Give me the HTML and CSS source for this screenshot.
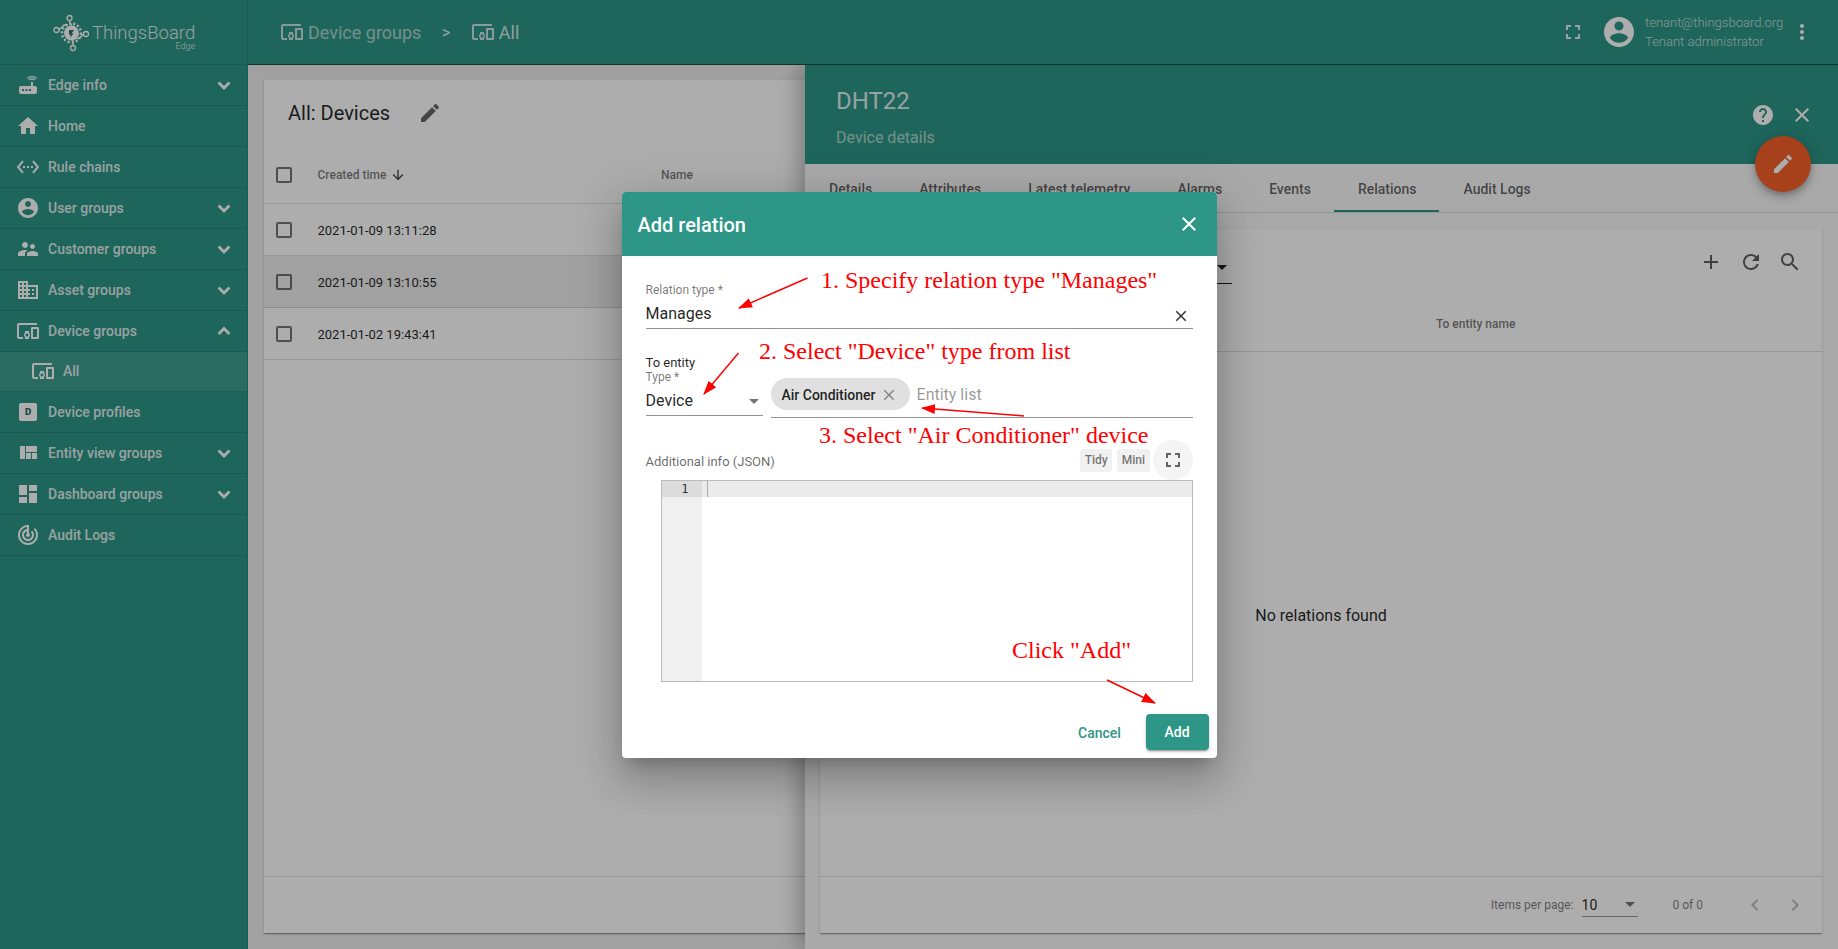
FILE: index.html
```html
<!DOCTYPE html>
<html>
<head>
    <title>ThingsBoard Edge - Add relation</title>
    <meta charset="utf-8">
    <link rel="stylesheet" href="styles.css">
</head>
<body>
    <svg class="sprite" xmlns="http://www.w3.org/2000/svg">
        <symbol id="i-router" viewBox="0 0 24 24"><path d="M20.2 5.9l.8-.8C19.6 3.7 17.8 3 16 3s-3.6.7-5 2.1l.8.8C13 4.8 14.5 4.2 16 4.2s3 .6 4.2 1.7zm-.9.8c-.9-.9-2.1-1.4-3.3-1.4s-2.4.5-3.3 1.4l.8.8c.7-.7 1.6-1 2.5-1 .9 0 1.8.3 2.5 1l.8-.8zM19 13h-2V9h-2v4H5c-1.1 0-2 .9-2 2v4c0 1.1.9 2 2 2h14c1.1 0 2-.9 2-2v-4c0-1.1-.9-2-2-2zM8 18H6v-2h2v2zm3.5 0h-2v-2h2v2zm3.5 0h-2v-2h2v2z"/></symbol>
        <symbol id="i-home" viewBox="0 0 24 24"><path d="M10 20v-6h4v6h5v-8h3L12 3 2 12h3v8z"/></symbol>
        <symbol id="i-ethernet" viewBox="0 0 24 24"><path d="M7.77 6.76L6.23 5.48.82 12l5.41 6.52 1.54-1.28L3.42 12l4.35-5.24zM7 13h2v-2H7v2zm10-2h-2v2h2v-2zm-6 2h2v-2h-2v2zm6.77-7.52l-1.54 1.28L20.58 12l-4.35 5.24 1.54 1.28L23.18 12l-5.41-6.52z"/></symbol>
        <symbol id="i-account" viewBox="0 0 24 24"><path d="M12 2C6.48 2 2 6.48 2 12s4.48 10 10 10 10-4.48 10-10S17.52 2 12 2zm0 3c1.66 0 3 1.34 3 3s-1.34 3-3 3-3-1.34-3-3 1.34-3 3-3zm0 14.2c-2.5 0-4.71-1.28-6-3.22.03-1.99 4-3.08 6-3.08 1.99 0 5.97 1.09 6 3.08-1.29 1.94-3.5 3.22-6 3.22z"/></symbol>
        <symbol id="i-people" viewBox="0 0 24 24"><path d="M16.5 12c1.38 0 2.49-1.12 2.49-2.5S17.88 7 16.5 7C15.12 7 14 8.12 14 9.5s1.12 2.5 2.5 2.5zM9 11c1.66 0 2.99-1.34 2.99-3S10.66 5 9 5C7.34 5 6 6.34 6 8s1.34 3 3 3zm7.5 3c-1.83 0-5.5.92-5.5 2.75V19h11v-2.25c0-1.83-3.67-2.75-5.5-2.75zM9 13c-2.33 0-7 1.17-7 3.5V19h7v-2.25c0-.85.33-2.34 2.37-3.47C10.5 13.1 9.66 13 9 13z"/></symbol>
        <symbol id="i-domain" viewBox="0 0 24 24"><path d="M12 7V3H2v18h20V7H12zM6 19H4v-2h2v2zm0-4H4v-2h2v2zm0-4H4V9h2v2zm0-4H4V5h2v2zm4 12H8v-2h2v2zm0-4H8v-2h2v2zm0-4H8V9h2v2zm0-4H8V5h2v2zm10 12h-8v-2h2v-2h-2v-2h2v-2h-2V9h8v10zm-2-8h-2v2h2v-2zm0 4h-2v2h2v-2z"/></symbol>
        <symbol id="i-devices" viewBox="0 0 24 24"><path d="M3 6h18V4H3c-1.1 0-2 .9-2 2v12c0 1.1.9 2 2 2h4v-2H3V6zm10 6H9v1.78c-.61.55-1 1.33-1 2.22s.39 1.67 1 2.22V20h4v-1.78c.61-.55 1-1.34 1-2.22s-.39-1.67-1-2.22V12zm-2 5.5c-.83 0-1.5-.67-1.5-1.5s.67-1.5 1.5-1.5 1.5.67 1.5 1.5-.67 1.5-1.5 1.5zM22 8h-6c-.5 0-1 .5-1 1v10c0 .5.5 1 1 1h6c.5 0 1-.5 1-1V9c0-.5-.5-1-1-1zm-1 10h-4v-8h4v8z"/></symbol>
        <symbol id="i-quilt" viewBox="0 0 24 24"><path d="M10 18h5v-6h-5v6zm-6 0h5V5H4v13zm12 0h5v-6h-5v6zM10 5v6h11V5H10z"/></symbol>
        <symbol id="i-dashboard" viewBox="0 0 24 24"><path d="M3 13h8V3H3v10zm0 8h8v-6H3v6zm10 0h8V11h-8v10zm0-18v6h8V3h-8z"/></symbol>
        <symbol id="i-track" viewBox="0 0 24 24"><path d="M19.07 4.93l-1.41 1.41C19.1 7.79 20 9.79 20 12c0 4.42-3.58 8-8 8s-8-3.58-8-8c0-4.08 3.05-7.44 7-7.93v2.02C8.16 6.57 6 9.03 6 12c0 3.31 2.69 6 6 6s6-2.69 6-6c0-1.66-.67-3.16-1.76-4.24l-1.41 1.41C15.55 9.9 16 10.9 16 12c0 2.21-1.79 4-4 4s-4-1.79-4-4c0-1.86 1.28-3.41 3-3.86v2.14c-.6.35-1 .98-1 1.72 0 1.1.9 2 2 2s2-.9 2-2c0-.74-.4-1.38-1-1.72V2h-1C6.48 2 2 6.48 2 12s4.48 10 10 10 10-4.48 10-10c0-2.76-1.12-5.26-2.93-7.07z"/></symbol>
        <symbol id="i-edit" viewBox="0 0 24 24"><path d="M3 17.25V21h3.75L17.81 9.94l-3.75-3.75L3 17.25zM20.71 7.04c.39-.39.39-1.02 0-1.41l-2.34-2.34c-.39-.39-1.02-.39-1.41 0l-1.83 1.83 3.75 3.75 1.83-1.83z"/></symbol>
        <symbol id="i-close" viewBox="0 0 24 24"><path d="M19 6.41L17.59 5 12 10.59 6.41 5 5 6.41 10.59 12 5 17.59 6.41 19 12 13.41 17.59 19 19 17.59 13.41 12z"/></symbol>
        <symbol id="i-fullscreen" viewBox="0 0 24 24"><path d="M7 14H5v5h5v-2H7v-3zm-2-4h2V7h3V5H5v5zm12 7h-3v2h5v-5h-2v3zM14 5v2h3v3h2V5h-5z"/></symbol>
        <symbol id="i-more" viewBox="0 0 24 24"><path d="M12 8c1.1 0 2-.9 2-2s-.9-2-2-2-2 .9-2 2 .9 2 2 2zm0 2c-1.1 0-2 .9-2 2s.9 2 2 2 2-.9 2-2-.9-2-2-2zm0 6c-1.1 0-2 .9-2 2s.9 2 2 2 2-.9 2-2-.9-2-2-2z"/></symbol>
        <symbol id="i-help" viewBox="0 0 24 24"><path d="M12 2C6.48 2 2 6.48 2 12s4.48 10 10 10 10-4.48 10-10S17.52 2 12 2zm1 17h-2v-2h2v2zm2.07-7.75l-.9.92C13.45 12.9 13 13.5 13 15h-2v-.5c0-1.1.45-2.1 1.17-2.83l1.24-1.26c.37-.36.59-.86.59-1.41 0-1.1-.9-2-2-2s-2 .9-2 2H8c0-2.21 1.79-4 4-4s4 1.79 4 4c0 .88-.36 1.68-.93 2.25z"/></symbol>
        <symbol id="i-add" viewBox="0 0 24 24"><path d="M19 13h-6v6h-2v-6H5v-2h6V5h2v6h6v2z"/></symbol>
        <symbol id="i-refresh" viewBox="0 0 24 24"><path d="M17.65 6.35C16.2 4.9 14.21 4 12 4c-4.42 0-7.99 3.58-7.99 8s3.57 8 7.99 8c3.73 0 6.84-2.55 7.73-6h-2.08c-.82 2.33-3.04 4-5.65 4-3.31 0-6-2.69-6-6s2.69-6 6-6c1.66 0 3.14.69 4.22 1.78L13 11h7V4l-2.35 2.35z"/></symbol>
        <symbol id="i-search" viewBox="0 0 24 24"><path d="M15.5 14h-.79l-.28-.27C15.41 12.59 16 11.11 16 9.5 16 5.91 13.09 3 9.5 3S3 5.91 3 9.5 5.91 16 9.5 16c1.61 0 3.09-.59 4.23-1.57l.27.28v.79l5 4.99L20.49 19l-4.99-5zm-6 0C7.01 14 5 11.99 5 9.5S7.01 5 9.5 5 14 7.01 14 9.5 11.99 14 9.5 14z"/></symbol>
        <symbol id="i-left" viewBox="0 0 24 24"><path d="M15.41 7.41L14 6l-6 6 6 6 1.41-1.41L10.83 12z"/></symbol>
        <symbol id="i-right" viewBox="0 0 24 24"><path d="M10 6L8.59 7.41 13.17 12l-4.58 4.59L10 18l6-6z"/></symbol>
        <symbol id="i-down" viewBox="0 0 24 24"><path d="M20 12l-1.41-1.41L13 16.17V4h-2v12.17l-5.58-5.59L4 12l8 8 8-8z"/></symbol>
        <symbol id="i-chev-down" viewBox="0 0 24 24"><path d="M5.5 9l6.5 6.5L18.500 9" fill="none" stroke="currentColor" stroke-width="3.4"/></symbol>
        <symbol id="i-chev-up" viewBox="0 0 24 24"><path d="M5.500 15.500L12 9l6.500 6.500" fill="none" stroke="currentColor" stroke-width="3.4"/></symbol>
    </svg>

    <aside class="sidebar">
        <div class="logo">
            <svg class="logo-mark" viewBox="0 0 38 38">
                <g fill="none" stroke="currentColor" stroke-width="1.3">
                    <circle cx="16.500" cy="4" r="2.500"/>
                    <circle cx="3.500" cy="16" r="2.500"/>
                    <circle cx="33" cy="20" r="2.500"/>
                    <circle cx="20" cy="34" r="2.500"/>
                    <path d="M16.500 6.500L19 13M6 16l5-5h4M30.500 20.500l-4.500 4h-3M20 31.500V24"/>
                </g>
                <circle cx="18.500" cy="19" r="7.500" fill="currentColor"/>
                <circle cx="18.500" cy="19" r="9.500" fill="none" stroke="currentColor" stroke-width="2.500" stroke-dasharray="2 2.200"/>
                <path d="M16 16h5l-2.500 3.500h2L17 24l.8-3.500h-1.800z" fill="#1f6e62"/>
            </svg>
            <div class="logo-text">
                <span class="logo-name">ThingsBoard</span>
                <span class="logo-edge">Edge</span>
            </div>
        </div>
        <nav class="menu">
            <a class="menu-item"><svg class="icon"><use href="#i-router"/></svg><span>Edge info</span><svg class="chev"><use href="#i-chev-down"/></svg></a>
            <a class="menu-item"><svg class="icon"><use href="#i-home"/></svg><span>Home</span></a>
            <a class="menu-item"><svg class="icon"><use href="#i-ethernet"/></svg><span>Rule chains</span></a>
            <a class="menu-item"><svg class="icon"><use href="#i-account"/></svg><span>User groups</span><svg class="chev"><use href="#i-chev-down"/></svg></a>
            <a class="menu-item"><svg class="icon"><use href="#i-people"/></svg><span>Customer groups</span><svg class="chev"><use href="#i-chev-down"/></svg></a>
            <a class="menu-item"><svg class="icon"><use href="#i-domain"/></svg><span>Asset groups</span><svg class="chev"><use href="#i-chev-down"/></svg></a>
            <a class="menu-item"><svg class="icon"><use href="#i-devices"/></svg><span>Device groups</span><svg class="chev"><use href="#i-chev-up"/></svg></a>
            <a class="menu-item sub-item"><svg class="icon"><use href="#i-devices"/></svg><span>All</span></a>
            <a class="menu-item"><span class="profile-icon">D</span><span>Device profiles</span></a>
            <a class="menu-item"><svg class="icon"><use href="#i-quilt"/></svg><span>Entity view groups</span><svg class="chev"><use href="#i-chev-down"/></svg></a>
            <a class="menu-item"><svg class="icon"><use href="#i-dashboard"/></svg><span>Dashboard groups</span><svg class="chev"><use href="#i-chev-down"/></svg></a>
            <a class="menu-item"><svg class="icon"><use href="#i-track"/></svg><span>Audit Logs</span></a>
        </nav>
    </aside>

    <div class="main">
        <header class="topbar">
            <div class="crumbs">
                <svg class="crumb-icon"><use href="#i-devices"/></svg>
                <span class="crumb-dim">Device groups</span>
                <span class="crumb-sep">&gt;</span>
                <svg class="crumb-icon"><use href="#i-devices"/></svg>
                <span class="crumb-now">All</span>
            </div>
            <div class="user-area">
                <svg class="icon-24 fs-icon"><use href="#i-fullscreen"/></svg>
                <svg class="avatar"><use href="#i-account"/></svg>
                <div class="user-info">
                    <div>tenant@thingsboard.org</div>
                    <div>Tenant administrator</div>
                </div>
                <svg class="icon-24"><use href="#i-more"/></svg>
            </div>
        </header>

        <div class="content">
            <section class="card devices">
                <div class="card-title">
                    <h1>All: Devices</h1>
                    <svg class="icon-24 title-edit"><use href="#i-edit"/></svg>
                </div>
                <div class="t-row t-head">
                    <span class="check"></span>
                    <span class="sort">Created time <svg class="sort-icon"><use href="#i-down"/></svg></span>
                    <span>Name</span>
                </div>
                <div class="t-row"><span class="check"></span><span>2021-01-09 13:11:28</span></div>
                <div class="t-row t-hover"><span class="check"></span><span>2021-01-09 13:10:55</span></div>
                <div class="t-row"><span class="check"></span><span>2021-01-02 19:43:41</span></div>
                <div class="card-foot"></div>
            </section>
        </div>
    </div>

    <section class="drawer">
        <div class="drawer-head">
            <div class="drawer-name">DHT22</div>
            <div class="drawer-sub">Device details</div>
            <div class="drawer-actions">
                <svg class="icon-24"><use href="#i-help"/></svg>
                <svg class="icon-24"><use href="#i-close"/></svg>
            </div>
            <div class="fab"><svg class="icon-24"><use href="#i-edit"/></svg></div>
        </div>
        <div class="tabs">
            <span class="tab">Details</span>
            <span class="tab">Attributes</span>
            <span class="tab">Latest telemetry</span>
            <span class="tab">Alarms</span>
            <span class="tab">Events</span>
            <span class="tab tab-on">Relations</span>
            <span class="tab">Audit Logs</span>
        </div>
        <div class="drawer-body">
            <div class="card relations">
                <div class="rel-tools">
                    <div class="rel-select"><i class="caret caret-dark"></i></div>
                    <div class="rel-buttons">
                        <svg class="icon-24"><use href="#i-add"/></svg>
                        <svg class="icon-24"><use href="#i-refresh"/></svg>
                        <svg class="icon-24"><use href="#i-search"/></svg>
                    </div>
                </div>
                <div class="rel-head">To entity name</div>
                <div class="rel-empty">No relations found</div>
                <div class="rel-foot">
                    <span class="pg-label">Items per page:</span>
                    <div class="pg-select"><span>10</span><i class="caret"></i></div>
                    <span class="pg-range">0 of 0</span>
                    <svg class="icon-24 pg-btn"><use href="#i-left"/></svg>
                    <svg class="icon-24 pg-btn"><use href="#i-right"/></svg>
                </div>
            </div>
        </div>
    </section>

    <div class="backdrop">
        <div class="dialog">
            <div class="dialog-head">
                <h2>Add relation</h2>
                <svg class="icon-24"><use href="#i-close"/></svg>
            </div>
            <div class="dialog-form">
                <div class="field type-field">
                    <label>Relation type *</label>
                    <div class="value-row">
                        <span>Manages</span>
                        <svg class="clear-icon"><use href="#i-close"/></svg>
                    </div>
                </div>
                <div class="to-entity">To entity</div>
                <div class="entity-row">
                    <div class="field entity-type">
                        <label>Type *</label>
                        <div class="value-row">
                            <span>Device</span>
                            <i class="caret"></i>
                        </div>
                    </div>
                    <div class="entity-list">
                        <span class="chip">Air Conditioner<svg class="chip-x"><use href="#i-close"/></svg></span>
                        <span class="placeholder">Entity list</span>
                    </div>
                </div>
                <div class="json-row">
                    <span class="json-label">Additional info (JSON)</span>
                    <span class="mini-btn">Tidy</span>
                    <span class="mini-btn">Mini</span>
                    <span class="round-btn"><svg class="icon-24"><use href="#i-fullscreen"/></svg></span>
                </div>
                <div class="editor">
                    <div class="gutter"><div class="gutter-on">1</div></div>
                    <div class="code"><div class="code-on"><i class="cursor"></i></div></div>
                </div>
            </div>
            <div class="dialog-actions">
                <span class="btn-text">Cancel</span>
                <span class="btn-add">Add</span>
            </div>
        </div>
    </div>

    <div class="notes">
        <svg class="arrows" viewBox="0 0 1838 949">
            <defs>
                <marker id="head" markerUnits="userSpaceOnUse" markerWidth="14" markerHeight="10" refX="13" refY="5" orient="auto">
                    <path d="M0 0L14 5L0 10z" fill="#f00"/>
                </marker>
            </defs>
            <g stroke="#f00" stroke-width="1.500">
                <line x1="807.500" y1="278" x2="739" y2="308" marker-end="url(#head)"/>
                <line x1="738.500" y1="353" x2="704" y2="394" marker-end="url(#head)"/>
                <line x1="1024" y1="416" x2="922" y2="408" marker-end="url(#head)"/>
                <line x1="1107" y1="680" x2="1155" y2="703" marker-end="url(#head)"/>
            </g>
        </svg>
        <span class="note note-1">1. Specify relation type "Manages"</span>
        <span class="note note-2">2. Select "Device" type from list</span>
        <span class="note note-3">3. Select "Air Conditioner" device</span>
        <span class="note note-4">Click "Add"</span>
    </div>
</body>
</html>
```

FILE: styles.css
```css
* {
    box-sizing: border-box;
}
html, body {
    height: 100%;
}
body {
    margin: 0;
    display: flex;
    overflow: hidden;
    position: relative;
    font-family: Roboto, "Noto Sans", sans-serif;
    font-size: 14px;
    color: rgba(0, 0, 0, .87);
    background: #eee;
}
.sprite {
    display: none;
}
svg {
    fill: currentColor;
    flex: none;
}
.icon-24 {
    width: 24px;
    height: 24px;
}

/* sidebar */
.sidebar {
    width: 248px;
    flex: none;
    background: #2d9687;
    color: #fff;
    border-right: 1px solid rgba(0, 0, 0, .08);
    z-index: 2;
}
.logo {
    height: 65px;
    display: flex;
    align-items: flex-start;
    padding: 14px 0 0 53px;
    border-bottom: 1px solid rgba(0, 0, 0, .12);
}
.logo-mark {
    width: 38px;
    height: 38px;
}
.logo-text {
    display: flex;
    flex-direction: column;
    align-items: flex-end;
    margin-left: 1px;
}
.logo-name {
    font-size: 18.500px;
    font-weight: 300;
    line-height: 18px;
    margin-top: 10px;
    opacity: .85;
}
.logo-edge {
    font-size: 9px;
    font-weight: 300;
    line-height: 8px;
    opacity: .85;
}
.menu-item {
    height: 41px;
    display: flex;
    align-items: center;
    padding-left: 16px;
    font-weight: 500;
    border-bottom: 1px solid rgba(0, 0, 0, .12);
    color: rgba(255, 255, 255, .87);
}
.menu-item .icon {
    width: 24px;
    height: 24px;
    margin-right: 8px;
    color: #fff;
}
.menu-item .chev {
    width: 20px;
    height: 20px;
    margin-left: auto;
    margin-right: 13px;
    color: #fff;
}
.sub-item {
    height: 40px;
    padding-left: 31px;
    padding-bottom: 1px;
    background: rgba(255, 255, 255, .08);
}
.profile-icon {
    width: 18px;
    height: 18px;
    margin: 0 11px 0 3px;
    background: #fff;
    border-radius: 2px;
    color: #1f6e62;
    font-family: "Liberation Mono", monospace;
    font-size: 11px;
    font-weight: 700;
    line-height: 18px;
    text-align: center;
}

/* top bar and page */
.main {
    flex: 1;
    min-width: 0;
    display: flex;
    flex-direction: column;
}
.topbar {
    height: 65px;
    flex: none;
    display: flex;
    align-items: center;
    padding: 0 24px 0 32px;
    background: #2d9687;
    color: #fff;
    border-bottom: 1px solid rgba(0, 0, 0, .5);
    z-index: 2;
}
.crumbs {
    display: flex;
    align-items: center;
    font-size: 18px;
}
.crumb-icon {
    width: 24px;
    height: 24px;
    margin-right: 4px;
    opacity: .75;
}
.crumb-dim {
    opacity: .6;
}
.crumb-sep {
    margin: 0 20.500px;
    font-size: 16px;
    opacity: .85;
}
.crumb-now {
    opacity: .8;
}
.user-area {
    margin-left: auto;
    display: flex;
    align-items: center;
}
.fs-icon {
    opacity: .85;
}
.avatar {
    width: 36px;
    height: 36px;
    margin-left: 16px;
}
.user-info {
    width: 145px;
    margin-left: 8px;
    font-size: 13px;
    font-weight: 300;
    line-height: 19px;
    opacity: .7;
}
.content {
    flex: 1;
    min-height: 0;
    display: flex;
    padding: 15px 16px 16px;
}
.card {
    background: #fff;
    box-shadow: 0 2px 1px -1px rgba(0, 0, 0, .2), 0 1px 1px rgba(0, 0, 0, .14), 0 1px 3px rgba(0, 0, 0, .12);
}
.devices {
    flex: 1;
    display: flex;
    flex-direction: column;
}
.card-title {
    height: 66px;
    flex: none;
    display: flex;
    align-items: center;
    padding-left: 24px;
}
.card-title h1 {
    margin: 0;
    font-size: 20px;
    font-weight: 400;
}
.title-edit {
    margin-left: 28px;
    color: rgba(0, 0, 0, .6);
}
.t-row {
    height: 52px;
    flex: none;
    display: grid;
    grid-template-columns: 53.500px 343.500px 1fr;
    align-items: center;
    padding-top: 1px;
    font-size: 13px;
    border-bottom: 1px solid rgba(0, 0, 0, .12);
}
.t-head {
    height: 58px;
    padding-top: 0;
    font-size: 12px;
    font-weight: 500;
    color: rgba(0, 0, 0, .54);
}
.t-hover {
    background: #ededed;
}
.check {
    width: 16px;
    height: 16px;
    margin-left: 12px;
    border: 2px solid rgba(0, 0, 0, .54);
    border-radius: 2px;
}
.sort {
    display: flex;
    align-items: center;
}
.sort-icon {
    width: 16px;
    height: 16px;
    margin-left: 4px;
    color: rgba(0, 0, 0, .75);
}
.card-foot {
    margin-top: auto;
    height: 57px;
    flex: none;
    border-top: 1px solid rgba(0, 0, 0, .12);
}

/* details drawer */
.drawer {
    position: absolute;
    top: 65px;
    right: 0;
    bottom: 0;
    width: 1033px;
    display: flex;
    flex-direction: column;
    background: #fafafa;
    box-shadow: -6px 0 20px rgba(0, 0, 0, .28);
}
.drawer-head {
    height: 99px;
    flex: none;
    position: relative;
    padding: 20px 31px;
    background: #2d9687;
    color: #fff;
}
.drawer-name {
    font-size: 24px;
    line-height: 32px;
    opacity: .85;
}
.drawer-sub {
    margin-top: 9px;
    font-size: 16px;
    line-height: 24px;
    opacity: .6;
}
.drawer-actions {
    position: absolute;
    top: 38px;
    right: 24px;
    display: flex;
    gap: 15px;
}
.fab {
    position: absolute;
    right: 27px;
    bottom: -28px;
    width: 56px;
    height: 56px;
    display: flex;
    align-items: center;
    justify-content: center;
    border-radius: 50%;
    background: #f6602a;
    box-shadow: 0 3px 5px -1px rgba(0, 0, 0, .2), 0 6px 10px rgba(0, 0, 0, .14), 0 1px 18px rgba(0, 0, 0, .12);
    z-index: 1;
}
.tabs {
    height: 49px;
    flex: none;
    display: flex;
    border-bottom: 1px solid rgba(0, 0, 0, .12);
}
.tab {
    padding: 0 23px 0 24px;
    line-height: 50px;
    font-weight: 500;
    color: rgba(0, 0, 0, .62);
}
.tab-on {
    height: 48px;
    border-bottom: 2px solid #2d9687;
}
.drawer-body {
    flex: 1;
    min-height: 0;
    display: flex;
    padding: 16px 16px 16px 15px;
}
.relations {
    flex: 1;
    display: flex;
    flex-direction: column;
}
.rel-tools {
    height: 71px;
    flex: none;
    display: flex;
    padding-right: 20px;
}
.rel-select {
    width: 396px;
    height: 32px;
    margin: 23px 0 0 16px;
    display: flex;
    align-items: center;
    justify-content: flex-end;
    padding-right: 5px;
    border-bottom: 1px solid rgba(0, 0, 0, .87);
}
.rel-buttons {
    margin: 21px 0 0 auto;
    display: flex;
    gap: 15.500px;
    color: rgba(0, 0, 0, .62);
}
.rel-head {
    height: 52px;
    flex: none;
    padding-left: 616px;
    font-size: 12px;
    font-weight: 500;
    line-height: 48px;
    color: rgba(0, 0, 0, .54);
    border-bottom: 1px solid rgba(0, 0, 0, .12);
}
.rel-empty {
    flex: 1;
    display: flex;
    align-items: center;
    justify-content: center;
    padding-top: 3px;
    font-size: 16px;
}
.rel-foot {
    height: 57px;
    flex: none;
    display: flex;
    align-items: center;
    padding-right: 15px;
    justify-content: flex-end;
    font-size: 12px;
    color: rgba(0, 0, 0, .54);
    border-top: 1px solid rgba(0, 0, 0, .12);
}
.pg-select {
    width: 56px;
    height: 24px;
    margin: 0 35px 0 8px;
    display: flex;
    align-items: center;
    justify-content: space-between;
    padding-right: 3px;
    font-size: 14px;
    color: rgba(0, 0, 0, .87);
    border-bottom: 1px solid rgba(0, 0, 0, .42);
}
.pg-range {
    margin-right: 40px;
}
.pg-btn {
    color: rgba(0, 0, 0, .26);
    margin-left: 16px;
}
.pg-btn:first-of-type {
    margin-left: 0;
}
.caret {
    width: 0;
    height: 0;
    border-left: 5px solid transparent;
    border-right: 5px solid transparent;
    border-top: 5px solid rgba(0, 0, 0, .54);
}
.caret-dark {
    border-top-color: rgba(0, 0, 0, .87);
}

/* dimmed layer and dialog */
.backdrop {
    position: absolute;
    inset: 0;
    display: flex;
    align-items: center;
    justify-content: center;
    padding-top: 1px;
    background: rgba(0, 0, 0, .32);
    z-index: 5;
}
.dialog {
    width: 595px;
    height: 566px;
    display: flex;
    flex-direction: column;
    overflow: hidden;
    background: #fff;
    border-radius: 4px;
    box-shadow: 0 11px 15px -7px rgba(0, 0, 0, .2), 0 24px 38px 3px rgba(0, 0, 0, .14), 0 9px 46px 8px rgba(0, 0, 0, .12);
}
.dialog-head {
    height: 64px;
    flex: none;
    display: flex;
    align-items: center;
    justify-content: space-between;
    padding: 0 16px;
    background: #2d9687;
    color: #fff;
}
.dialog-head h2 {
    margin: 1px 0 0;
    font-size: 20px;
    font-weight: 500;
}
.dialog-form {
    padding: 26px 24px 0;
}
.field label {
    display: block;
    font-size: 12px;
    line-height: 16px;
    color: rgba(0, 0, 0, .54);
}
.value-row {
    display: flex;
    align-items: center;
    justify-content: space-between;
    font-size: 16px;
    line-height: 24px;
    color: rgba(0, 0, 0, .87);
}
.type-field {
    padding-bottom: 2px;
    border-bottom: 1px solid rgba(0, 0, 0, .42);
}
.type-field .value-row {
    margin-top: 4px;
}
.clear-icon {
    width: 18px;
    height: 18px;
    margin: 4px 3px 0 0;
    color: rgba(0, 0, 0, .8);
}
.to-entity {
    margin-top: 26px;
    font-size: 13px;
    line-height: 15px;
}
.entity-row {
    display: flex;
    gap: 8px;
    align-items: flex-start;
}
.entity-type {
    width: 117px;
    padding-bottom: 2px;
    border-bottom: 1px solid rgba(0, 0, 0, .42);
}
.entity-type label {
    line-height: 14px;
}
.entity-type .value-row {
    margin-top: 5px;
    padding-right: 4px;
}
.entity-list {
    flex: 1;
    height: 48px;
    display: flex;
    align-items: flex-start;
    padding-top: 8px;
    border-bottom: 1px solid rgba(0, 0, 0, .42);
}
.chip {
    height: 32px;
    display: flex;
    align-items: center;
    padding: 1px 12px 0 11px;
    border-radius: 16px;
    background: #e0e0e0;
    font-weight: 500;
}
.chip-x {
    width: 18px;
    height: 18px;
    margin-left: 4px;
    color: rgba(0, 0, 0, .4);
}
.placeholder {
    margin-left: 7px;
    font-size: 16px;
    line-height: 34px;
    color: rgba(0, 0, 0, .42);
}
.json-row {
    height: 40px;
    margin-top: 22px;
    display: flex;
    align-items: center;
}
.json-label {
    flex: 1;
    padding-top: 2px;
    font-size: 13px;
    color: rgba(0, 0, 0, .6);
}
.mini-btn {
    height: 23px;
    margin-right: 5px;
    padding: 0 4.500px;
    font-size: 12px;
    font-weight: 500;
    line-height: 23px;
    color: rgba(0, 0, 0, .54);
    background: #f1f1f1;
    border-radius: 3px;
}
.round-btn {
    width: 40px;
    height: 40px;
    margin-left: -2px;
    display: flex;
    align-items: center;
    justify-content: center;
    border-radius: 50%;
    background: #f4f4f4;
    color: rgba(0, 0, 0, .6);
}
.editor {
    height: 202px;
    margin-left: 15px;
    display: flex;
    border: 1px solid #bbb;
}
.gutter {
    width: 40px;
    flex: none;
    background: #f0f0f0;
}
.gutter-on {
    height: 16px;
    padding-right: 13px;
    text-align: right;
    font-family: "DejaVu Sans Mono", monospace;
    font-size: 12px;
    line-height: 17px;
    color: #333;
    background: #dcdcdc;
}
.code {
    flex: 1;
}
.code-on {
    height: 16px;
    background: #ebebeb;
    padding-left: 5px;
}
.cursor {
    display: block;
    width: 1px;
    height: 16px;
    background: #aaa;
}
.dialog-actions {
    margin-top: auto;
    padding: 8px;
    display: flex;
    justify-content: flex-end;
    align-items: center;
    gap: 2px;
    font-weight: 500;
}
.btn-text {
    width: 88px;
    padding-top: 1px;
    text-align: center;
    color: #2d9687;
}
.btn-add {
    width: 63px;
    height: 36px;
    line-height: 37px;
    text-align: center;
    color: #fff;
    background: #2d9687;
    border-radius: 4px;
    box-shadow: 0 3px 1px -2px rgba(0, 0, 0, .2), 0 2px 2px rgba(0, 0, 0, .14), 0 1px 5px rgba(0, 0, 0, .12);
}

/* red annotations on top of the screenshot */
.notes {
    position: absolute;
    inset: 0;
    pointer-events: none;
    z-index: 6;
}
.arrows {
    position: absolute;
    inset: 0;
    width: 100%;
    height: 100%;
    fill: none;
}
.note {
    position: absolute;
    font-family: "Liberation Serif", serif;
    font-size: 24px;
    line-height: 28px;
    color: #f00;
    white-space: nowrap;
}
.note-1 { left: 821px; top: 266px; }
.note-2 { left: 759px; top: 337px; }
.note-3 { left: 819px; top: 421px; }
.note-4 { left: 1012px; top: 636px; }
```
